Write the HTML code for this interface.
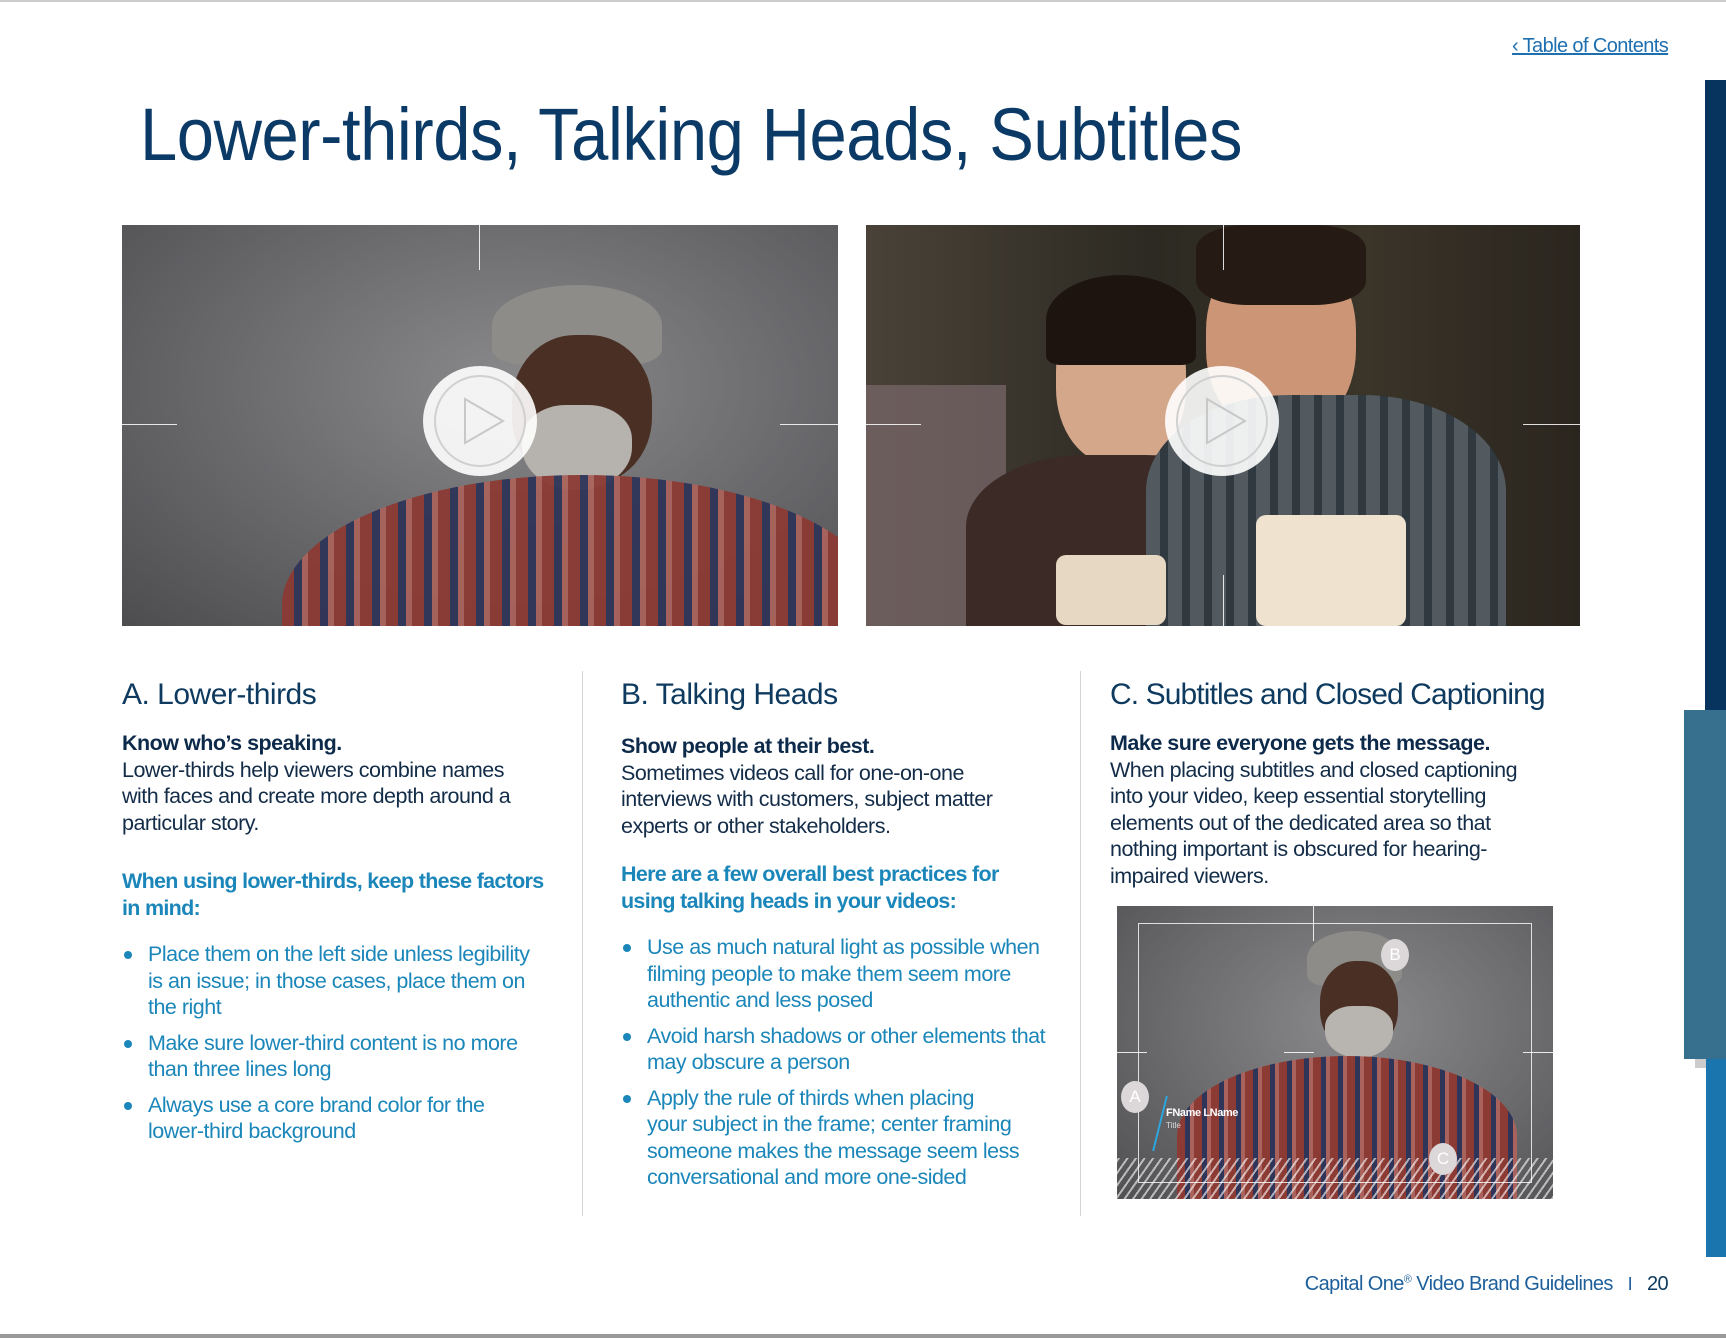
<!DOCTYPE html>
<html><head><meta charset="utf-8"><style>
*{margin:0;padding:0;box-sizing:border-box}
body{width:1726px;height:1338px;background:#fff;position:relative;overflow:hidden;font-family:"Liberation Sans",sans-serif;color:#132c48}
.a{position:absolute}
.txt{font-size:21.5px;line-height:26.5px;letter-spacing:-0.5px;white-space:nowrap}
.h2{font-size:30px;color:#0d3a5e;letter-spacing:-0.5px;line-height:34px;white-space:nowrap}
.b{font-weight:bold;color:#0d2a4a}
.bh{font-weight:bold;color:#1b86b9;letter-spacing:-0.7px}
ul{list-style:none}
li{position:relative;padding-left:26px;margin-bottom:9px;color:#1b86b9}
li:before{content:"";position:absolute;left:2px;top:10px;width:8px;height:8px;border-radius:50%;background:#1b86b9}
.vl{position:absolute;background:#fff;opacity:.85}
.play{position:absolute;width:114px;height:110px;border-radius:50%;background:rgba(255,255,255,.9)}
.play svg{position:absolute;left:0;top:0}
</style></head><body>
<div class="a" style="left:0;top:0;width:1726px;height:2px;background:#ccc"></div>
<div class="a" style="left:0;top:1334px;width:1726px;height:4px;background:#999"></div>
<a class="a" style="left:1512px;top:35px;font-size:20px;color:#1e6fb0;text-decoration:underline;letter-spacing:-0.6px">‹ Table of Contents</a>
<div class="a" style="left:140px;top:90px;font-size:74px;color:#0b3a66;letter-spacing:-0.5px;line-height:90px;white-space:nowrap;transform:scaleX(.905);transform-origin:left top">Lower-thirds, Talking Heads, Subtitles</div>

<div class="a" style="left:1705px;top:80px;width:21px;height:630px;background:#07345f"></div>
<div class="a" style="left:1684px;top:710px;width:42px;height:349px;background:#37708f"></div>
<div class="a" style="left:1695px;top:1059px;width:31px;height:9px;background:#ccc"></div>
<div class="a" style="left:1706px;top:1059px;width:20px;height:198px;background:#1a74ae"></div>

<!-- image 1 -->
<div class="a" style="left:122px;top:225px;width:716px;height:401px;overflow:hidden;background:radial-gradient(ellipse at 55% 40%,#8a8a8c,#6b6b6e 50%,#4d4d50)">
 <div class="a" style="left:370px;top:60px;width:170px;height:80px;border-radius:50% 50% 20% 20%;background:#8d8c88"></div>
 <div class="a" style="left:390px;top:110px;width:140px;height:150px;border-radius:45%;background:#4a3024"></div>
 <div class="a" style="left:400px;top:180px;width:110px;height:85px;border-radius:40% 40% 50% 50%;background:#b6b2ad"></div>
 <div class="a" style="left:160px;top:250px;width:600px;height:260px;border-radius:50% 50% 0 0;background:repeating-linear-gradient(90deg,#8c3b34 0 12px,#2f3558 12px 20px,#a9635c 20px 26px),#7d3530;opacity:.95"></div>
 <div class="vl" style="left:357px;top:0;width:1px;height:45px"></div>
 <div class="vl" style="left:0;top:199px;width:55px;height:1px"></div>
 <div class="vl" style="left:658px;top:199px;width:58px;height:1px"></div>
 <div class="play" style="left:301px;top:141px"><svg width="114" height="110"><circle cx="57" cy="55" r="45" fill="none" stroke="#d0d0d0" stroke-width="2"/><path d="M42 33 L80 55 L42 77 Z" fill="none" stroke="#c8c8c8" stroke-width="2"/></svg></div>
</div>

<!-- image 2 -->
<div class="a" style="left:866px;top:225px;width:714px;height:401px;overflow:hidden;background:linear-gradient(90deg,#4a4238,#2c2a22 40%,#3a3429 70%,#2a251e)">
 <div class="a" style="left:0;top:160px;width:140px;height:241px;background:#7b6a6c;opacity:.7"></div>
 <div class="a" style="left:190px;top:70px;width:130px;height:170px;border-radius:45%;background:#d4a78b"></div>
 <div class="a" style="left:180px;top:50px;width:150px;height:90px;border-radius:50% 50% 10% 10%;background:#1d1410"></div>
 <div class="a" style="left:100px;top:230px;width:300px;height:180px;border-radius:40% 40% 0 0;background:#3b2a26"></div>
 <div class="a" style="left:340px;top:20px;width:150px;height:190px;border-radius:45%;background:#cc9576"></div>
 <div class="a" style="left:330px;top:0;width:170px;height:80px;border-radius:30%;background:#261a14"></div>
 <div class="a" style="left:280px;top:170px;width:360px;height:240px;border-radius:40% 40% 0 0;background:repeating-linear-gradient(90deg,#525a60 0 14px,#303840 14px 22px),#4a5058"></div>
 <div class="a" style="left:190px;top:330px;width:110px;height:70px;border-radius:10px;background:#e7d8c3"></div>
 <div class="a" style="left:390px;top:290px;width:150px;height:111px;border-radius:10px;background:#efe3cf"></div>
 <div class="vl" style="left:357px;top:0;width:1px;height:45px"></div>
 <div class="vl" style="left:0;top:199px;width:55px;height:1px"></div>
 <div class="vl" style="left:657px;top:199px;width:57px;height:1px"></div>
 <div class="vl" style="left:357px;top:350px;width:1px;height:51px"></div>
 <div class="play" style="left:299px;top:141px"><svg width="114" height="110"><circle cx="57" cy="55" r="45" fill="none" stroke="#d0d0d0" stroke-width="2"/><path d="M42 33 L80 55 L42 77 Z" fill="none" stroke="#c8c8c8" stroke-width="2"/></svg></div>
</div>

<div class="a" style="left:582px;top:671px;width:1px;height:545px;background:#d5d5d5"></div>
<div class="a" style="left:1080px;top:671px;width:1px;height:545px;background:#d5d5d5"></div>

<!-- col A -->
<div class="a" style="left:122px;top:678px;width:440px">
 <div class="h2">A. Lower-thirds</div>
 <div class="txt" style="margin-top:18px"><span class="b">Know who’s speaking.</span><br>Lower-thirds help viewers combine names<br>with faces and create more depth around a<br>particular story.</div>
 <div class="txt bh" style="margin-top:32px">When using lower-thirds, keep these factors<br>in mind:</div>
 <ul class="txt" style="margin-top:20px">
  <li>Place them on the left side unless legibility<br>is an issue; in those cases, place them on<br>the right</li>
  <li>Make sure lower-third content is no more<br>than three lines long</li>
  <li>Always use a core brand color for the<br>lower-third background</li>
 </ul>
</div>

<!-- col B -->
<div class="a" style="left:621px;top:678px;width:440px">
 <div class="h2">B. Talking Heads</div>
 <div class="txt" style="margin-top:21px"><span class="b">Show people at their best.</span><br>Sometimes videos call for one-on-one<br>interviews with customers, subject matter<br>experts or other stakeholders.</div>
 <div class="txt bh" style="margin-top:22px">Here are a few overall best practices for<br>using talking heads in your videos:</div>
 <ul class="txt" style="margin-top:20px">
  <li>Use as much natural light as possible when<br>filming people to make them seem more<br>authentic and less posed</li>
  <li>Avoid harsh shadows or other elements that<br>may obscure a person</li>
  <li>Apply the rule of thirds when placing<br>your subject in the frame; center framing<br>someone makes the message seem less<br>conversational and more one-sided</li>
 </ul>
</div>

<!-- col C -->
<div class="a" style="left:1110px;top:678px;width:440px">
 <div class="h2" style="letter-spacing:-0.9px">C. Subtitles and Closed Captioning</div>
 <div class="txt" style="margin-top:18px"><span class="b">Make sure everyone gets the message.</span><br>When placing subtitles and closed captioning<br>into your video, keep essential storytelling<br>elements out of the dedicated area so that<br>nothing important is obscured for hearing-<br>impaired viewers.</div>
</div>

<!-- small image -->
<div class="a" style="left:1117px;top:906px;width:436px;height:293px;overflow:hidden;background:radial-gradient(ellipse at 55% 40%,#8a8a8c,#6b6b6e 55%,#505053)">
 <div class="a" style="left:190px;top:25px;width:95px;height:55px;border-radius:50% 50% 20% 20%;background:#8d8c88"></div>
 <div class="a" style="left:203px;top:55px;width:78px;height:90px;border-radius:45%;background:#4a3024"></div>
 <div class="a" style="left:208px;top:100px;width:68px;height:52px;border-radius:40% 40% 50% 50%;background:#b8b4af"></div>
 <div class="a" style="left:60px;top:150px;width:340px;height:160px;border-radius:50% 50% 0 0;background:repeating-linear-gradient(90deg,#8c3b34 0 8px,#2f3558 8px 13px,#a9635c 13px 17px)"></div>
 <div class="a" style="left:0;top:252px;width:436px;height:41px;background:repeating-linear-gradient(-55deg,rgba(255,255,255,.6) 0 2px,transparent 2px 7px)"></div>
 <div class="a" style="left:21px;top:17px;width:394px;height:260px;border:1px solid rgba(255,255,255,.8)"></div>
 <div class="vl" style="left:196px;top:0;width:1px;height:35px"></div>
 <div class="vl" style="left:0;top:146px;width:30px;height:1px"></div>
 <div class="vl" style="left:406px;top:146px;width:30px;height:1px"></div>
 <div class="vl" style="left:167px;top:146px;width:30px;height:1px"></div>
 <div class="a" style="left:4px;top:175px;width:28px;height:32px;border-radius:50%;background:#dcd8da;color:#fff;font-size:17px;text-align:center;line-height:32px">A</div>
 <div class="a" style="left:264px;top:33px;width:28px;height:32px;border-radius:50%;background:#dcd8da;color:#fff;font-size:17px;text-align:center;line-height:32px">B</div>
 <div class="a" style="left:312px;top:237px;width:28px;height:32px;border-radius:50%;background:#dcd8da;color:#fff;font-size:17px;text-align:center;line-height:32px">C</div>
 <div class="a" style="left:42px;top:190px;width:2px;height:55px;background:#2aa6e0;transform:skewX(-14deg)"></div>
 <div class="a" style="left:49px;top:201px;font-size:11px;font-weight:bold;color:#fff;letter-spacing:-0.4px">FName LName</div>
 <div class="a" style="left:49px;top:215px;font-size:8px;color:#ddd">Title</div>
</div>

<div class="a" style="left:1290px;top:1273px;width:378px;text-align:right;font-size:20px;color:#1d5f9b;letter-spacing:-0.6px;white-space:nowrap">Capital One<sup style="font-size:11px">®</sup> Video Brand Guidelines &nbsp; <span style="font-size:18px">I</span> &nbsp; <span style="color:#0d3a5e">20</span></div>
</body></html>
